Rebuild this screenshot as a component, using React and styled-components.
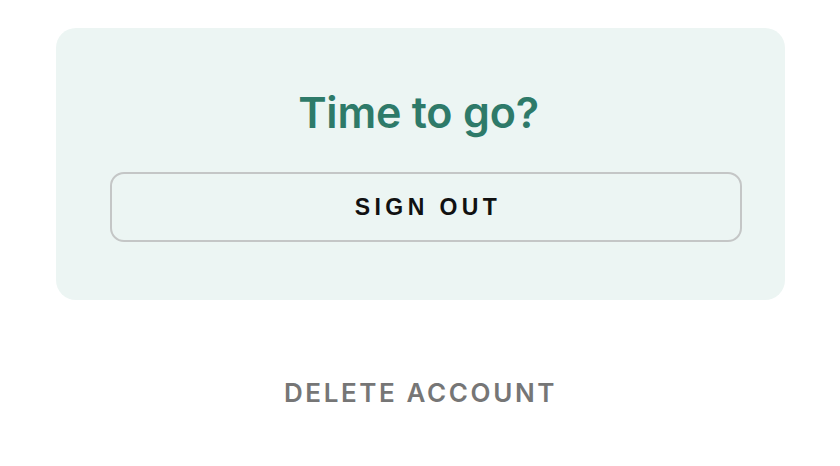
import React from 'react';
import styled, { createGlobalStyle } from 'styled-components';

const GlobalStyle = createGlobalStyle`
  html, body {
    margin: 0;
    padding: 0;
    background: #ffffff;
  }
  body {
    font-family: Inter, "Noto Sans", sans-serif;
    -webkit-font-smoothing: antialiased;
  }
`;

const Page = styled.div`
  display: flex;
  flex-direction: column;
  align-items: center;
  padding: 28px 55px 0 56px;
`;

const Card = styled.section`
  box-sizing: border-box;
  width: 100%;
  background: #ecf5f3;
  border-radius: 20px;
  padding: 60px 43px 58px 54px;
  display: flex;
  flex-direction: column;
  align-items: center;
`;

const Title = styled.h2`
  margin: 0 0 0 -15px;
  font-size: 43px;
  line-height: 49px;
  font-weight: 600;
  color: #2e7a69;
  letter-spacing: -0.2px;
`;

const OutlineButton = styled.button`
  box-sizing: border-box;
  margin-top: 35px;
  width: 100%;
  height: 70px;
  padding: 0 0 0 4px;
  background: transparent;
  border: 2px solid #c4c6c6;
  border-radius: 14px;
  font-family: "Liberation Sans", Arial, sans-serif;
  font-size: 23px;
  font-weight: 700;
  letter-spacing: 4.4px;
  color: #111111;
  cursor: pointer;
`;

const TextButton = styled.button`
  margin-top: 78px;
  background: none;
  border: none;
  padding: 0;
  font-family: inherit;
  font-size: 26px;
  line-height: 30px;
  font-weight: 600;
  letter-spacing: 2.6px;
  color: #767676;
  cursor: pointer;
`;

export default function App() {
  return (
    <>
      <GlobalStyle />
      <Page>
        <Card>
          <Title>Time to go?</Title>
          <OutlineButton>SIGN OUT</OutlineButton>
        </Card>
        <TextButton>DELETE ACCOUNT</TextButton>
      </Page>
    </>
  );
}
